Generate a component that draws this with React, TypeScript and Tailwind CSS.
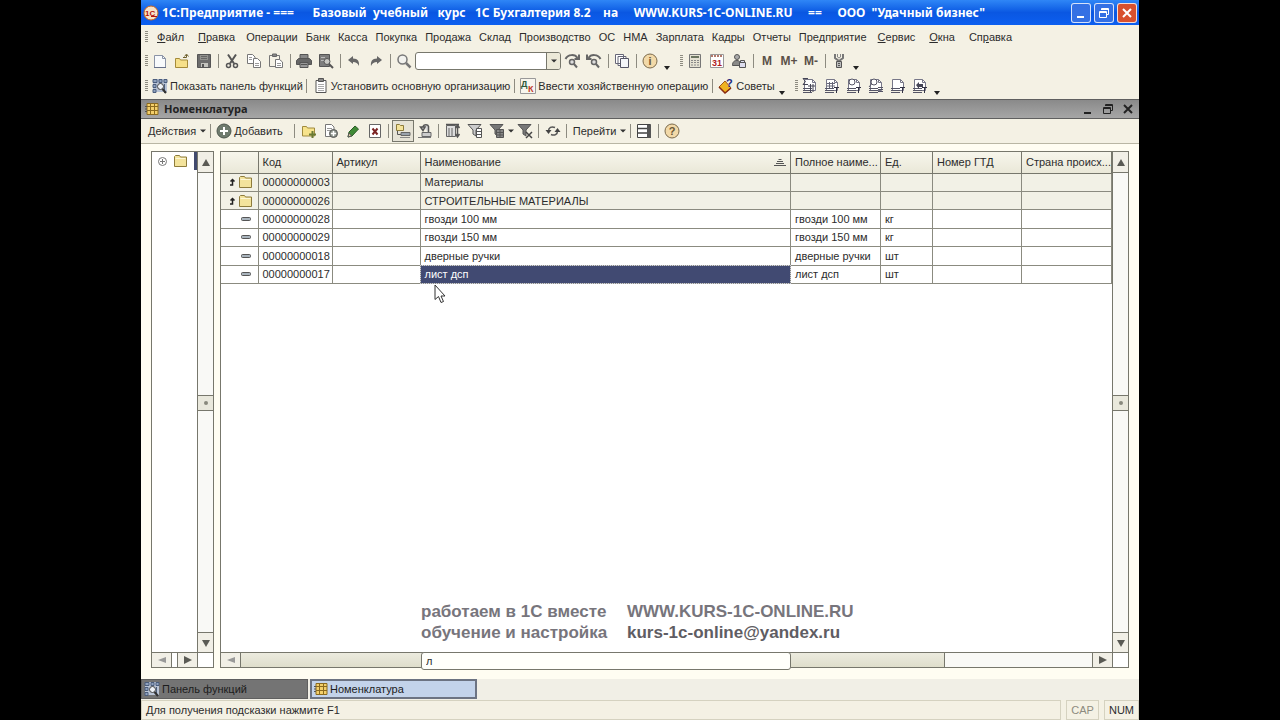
import type { ReactNode } from 'react';

interface Item {
  code: string;
  name: string;
  fullName: string;
  unit: string;
  isGroup: boolean;
}

const ITEMS: Item[] = [
  { code: '00000000003', name: 'Материалы', fullName: '', unit: '', isGroup: true },
  { code: '00000000026', name: 'СТРОИТЕЛЬНЫЕ МАТЕРИАЛЫ', fullName: '', unit: '', isGroup: true },
  { code: '00000000028', name: 'гвозди 100 мм', fullName: 'гвозди 100 мм', unit: 'кг', isGroup: false },
  { code: '00000000029', name: 'гвозди 150 мм', fullName: 'гвозди 150 мм', unit: 'кг', isGroup: false },
  { code: '00000000018', name: 'дверные ручки', fullName: 'дверные ручки', unit: 'шт', isGroup: false },
  { code: '00000000017', name: 'лист дсп', fullName: 'лист дсп', unit: 'шт', isGroup: false },
];

const SELECTED = '00000000017';

// [before, underlined hot key, after]
const MENU: [string, string, string][] = [
  ['', 'Ф', 'айл'],
  ['', 'П', 'равка'],
  ['Операции', '', ''],
  ['Банк', '', ''],
  ['Касса', '', ''],
  ['Покупка', '', ''],
  ['Продажа', '', ''],
  ['Склад', '', ''],
  ['Производство', '', ''],
  ['ОС', '', ''],
  ['НМА', '', ''],
  ['Зарплата', '', ''],
  ['Кадры', '', ''],
  ['Отчеты', '', ''],
  ['Предприятие', '', ''],
  ['', 'С', 'ервис'],
  ['', 'О', 'кна'],
  ['Сп', 'р', 'авка'],
];

/* ---------- icons ---------- */

function Svg({ children }: { children: ReactNode }) {
  return (
    <svg viewBox="0 0 16 16" className="size-4 shrink-0" fill="none" stroke="#555" aria-hidden="true">
      {children}
    </svg>
  );
}

const Logo = () => (
  <svg viewBox="0 0 16 16" className="size-4 shrink-0" aria-hidden="true">
    <circle cx="8" cy="8" r="7" fill="#f7e3c8" stroke="#c9641e" />
    <text x="2" y="11" fontSize="8" fontWeight="bold" fill="#b3120c">1С</text>
    <path d="M8 11.5h6" stroke="#b3120c" />
  </svg>
);
const NewIcon = () => (
  <Svg>
    <path d="M2.500 2.500h8l3 3v9h-11z" fill="#f8fafc" stroke="#8a93a6" />
    <path d="M10.500 2.500v3h3" stroke="#8a93a6" />
    <path d="M2 14.500h12" stroke="#66708a" />
  </Svg>
);
const OpenIcon = () => (
  <Svg>
    <path d="M1.500 5.500h4l1 1.500h7v7.500h-12z" fill="#f6e08a" stroke="#a58b3a" />
    <path d="M9 4.500h3.500V2M10.500 3.500l2-2.500 2 2.500" stroke="#6d5f2c" />
  </Svg>
);
const SaveIcon = () => (
  <Svg>
    <path d="M1.500 1.500h13v13h-13z" fill="#6c6c6c" />
    <path d="M4 2h8v5H4z" fill="#92928e" stroke="none" />
    <path d="M5 3.500h6M5 5.500h6" stroke="#666" />
    <path d="M5 10h7v4H5z" fill="#c4c4be" stroke="none" />
    <path d="M6 11h2v3H6z" fill="#555" stroke="none" />
  </Svg>
);
const CutIcon = () => (
  <Svg>
    <path d="M4 1.500l6 9M12 1.500l-6 9" strokeWidth="2" />
    <circle cx="4.500" cy="12.500" r="2" strokeWidth="1.500" />
    <circle cx="11.500" cy="12.500" r="2" strokeWidth="1.500" />
  </Svg>
);
const CopyIcon = () => (
  <Svg>
    <path d="M1.500 1.500h5l2.500 2.500v6.500H1.500z" fill="#fff" stroke="#777" />
    <path d="M7.500 5.500h4l3 3v6h-7z" fill="#fff" stroke="#777" />
    <path d="M3 4.500h3M3 6.500h3M9 10.500h4M9 12.500h4" stroke="#999" />
  </Svg>
);
const PasteIcon = () => (
  <Svg>
    <path d="M1.500 2.500h10v11h-10z" fill="#f5f2e6" stroke="#777" />
    <path d="M4.500 1h4v2.500h-4z" fill="#888" stroke="#666" />
    <path d="M7.500 6.500h4l3 2.500v5.500h-7z" fill="#fff" stroke="#777" />
    <path d="M9 10.500h4M9 12.500h4" stroke="#999" />
  </Svg>
);
const PrintIcon = () => (
  <Svg>
    <path d="M4 1.500h8V6H4z" fill="#888" />
    <path d="M2.500 5.500h11l2 2v4h-15v-4z" fill="#666" />
    <path d="M4 9.500h8v5H4z" fill="#999" />
    <path d="M5 11.500h6" />
  </Svg>
);
const PreviewIcon = () => (
  <Svg>
    <path d="M1.500 1.500h10v12h-10z" fill="#7d7d7d" />
    <path d="M3 4.500h4M3 7.500h3" stroke="#bbb" />
    <circle cx="9" cy="8.500" r="3" fill="#c8c8c4" />
    <path d="M11 11l4 4" strokeWidth="2" />
  </Svg>
);
const UndoIcon = () => (
  <Svg>
    <path d="M2 7l5-4v2.500c5 0 6.500 3 6 7.500-1.500-3-3-4-6-4V11z" fill="#666" stroke="none" />
  </Svg>
);
const RedoIcon = () => (
  <Svg>
    <path d="M14 7L9 3v2.500c-5 0-6.500 3-6 7.500 1.500-3 3-4 6-4V11z" fill="#666" stroke="none" />
  </Svg>
);
const SearchIcon = () => (
  <Svg>
    <circle cx="6.500" cy="6.500" r="4.500" fill="#f2f2ee" stroke="#777" strokeWidth="1.500" />
    <path d="M10 10l4.500 4.500" stroke="#777" strokeWidth="2.500" />
  </Svg>
);
const FindNextIcon = ({ back }: { back?: boolean }) => (
  <Svg>
    <path d={back ? 'M14.500 6C12 1 5 1 2.500 5M1 1.500v4.500h4.500' : 'M1.500 6C4 1 11 1 13.500 5M15 1.500v4.500h-4.500'} stroke="#666" strokeWidth="2" />
    <circle cx="8" cy="9" r="2.500" stroke="#666" strokeWidth="1.500" fill="#ddd" />
    <path d="M10 11l3 3.500" stroke="#666" strokeWidth="2" />
  </Svg>
);
const WindowsIcon = () => (
  <Svg>
    <path d="M1.500 1.500h8v9h-8zM4 3.500h8v9H4z" fill="#fff" stroke="#667" />
    <path d="M6.500 5.500h8v9h-8z" fill="#f4f6f9" stroke="#556" />
  </Svg>
);
const RoundIcon = ({ sign }: { sign: string }) => (
  <Svg>
    <circle cx="8" cy="8" r="7" fill="#f2d9a8" stroke="#7b6a4b" />
    <text x="8" y="12" fontSize="11" fontWeight="bold" textAnchor="middle" fill="#6a5733" stroke="none">{sign}</text>
  </Svg>
);
const CalcIcon = () => (
  <Svg>
    <path d="M2.500 1.500h11v13h-11z" fill="#e4e1d2" stroke="#777" />
    <path d="M4 4h8" stroke="#6b7560" strokeWidth="2" />
    <path d="M4 7.500h8M4 9.500h8M4 12h8" stroke="#888" strokeDasharray="2 1" />
  </Svg>
);
const CalendarIcon = () => (
  <Svg>
    <path d="M1.500 1.500h13v13h-13z" fill="#fff" stroke="#999" />
    <path d="M2 3h12" stroke="#b3796b" strokeWidth="2" strokeDasharray="2 1" />
    <text x="8" y="13" fontSize="9" fontWeight="bold" textAnchor="middle" fill="#b01c1c" stroke="none">31</text>
  </Svg>
);
const UserIcon = () => (
  <Svg>
    <circle cx="6" cy="4" r="2.500" fill="#aaa" />
    <path d="M1.500 12.500c0-4 2-5 4.500-5s3.500 1.500 3.500 5z" fill="#8a8a88" />
    <path d="M8.500 9.500h6v5h-6zM9.500 9.500V7.500h4v2" fill="#dde" />
  </Svg>
);
const WrenchIcon = () => (
  <Svg>
    <path d="M4 1v4l4 3 4-3V1M8 7v3" stroke="#777" strokeWidth="2" />
    <path d="M6.500 1v3L8 5l1.500-1V1" stroke="#888" />
    <path d="M5.500 8.500h5v6h-5z" fill="#bbb" />
    <path d="M7 10.500h2M7 12.500h2" />
  </Svg>
);
const FunctionsIcon = () => (
  <Svg>
    <path d="M1 1h14v13H1z" fill="#b9c4d6" stroke="none" />
    <path d="M1 1.500h4v3H1zM7 1.500h3v3H7zM12 1.500h3v3h-3zM1 6.500h3v3H1zM1 11.500h3v3H1zM12.500 6v9" fill="#8ea1bd" stroke="#4b5d7c" />
    <circle cx="8.500" cy="8.500" r="3" fill="#eef2f8" stroke="#444" />
    <path d="M10.500 11l3.500 4" stroke="#333" strokeWidth="2" />
  </Svg>
);
const ClipboardIcon = () => (
  <Svg>
    <path d="M3 2.500h10v12H3z" fill="#fff" />
    <path d="M5.500.5h5v3h-5z" fill="#888" />
    <path d="M5 6.500h6M5 8.500h6M5 10.500h6M5 12.500h6" stroke="#aaa" />
  </Svg>
);
const DebitIcon = () => (
  <Svg>
    <path d="M.5.5h15v15H.5z" fill="#f8f6ee" stroke="#999" />
    <text x="1" y="9" fontSize="9" fontWeight="bold" fill="#2c5a3c" stroke="none">Д</text>
    <text x="8" y="14" fontSize="9" fontWeight="bold" fill="#c0392b" stroke="none">К</text>
  </Svg>
);
const AdviceIcon = () => (
  <Svg>
    <path d="M1 9l6-6 6 7-6 5z" fill="#eeb320" stroke="#a35b16" />
    <path d="M1 9l6 6 6-5" stroke="#8a2b12" strokeWidth="1.500" />
    <text x="8" y="9" fontSize="11" fontWeight="bold" fill="#1d2a80" stroke="none">?</text>
  </Svg>
);
const ReportIcon = ({ kind }: { kind: string }) => (
  <Svg>
    <path d="M2.500 1.500h8l3 3v8h-11z" fill="#fff" stroke="#778" />
    <path d="M10.500 1.500v3h3" stroke="#778" />
    <path d="M1 10.500h9M1 12.500h9M1 14.500h9" stroke="#556" />
    {kind === 'sum' && <path d="M6 .5H1l2.500 3L1 6.500h5M6 8h7M8.500 6v8M11 6v8" stroke="#445" />}
    {kind === 'grid' && <path d="M3 5.500h8M3 8h8M5.500 4v6M8.500 4v6" stroke="#667" />}
    {kind.startsWith('lens') && <circle cx="6" cy="4" r="3" fill="#fff" stroke="#556" />}
    {kind === 'lens2' && <path d="M3.500 6L1 9M10 9.500h5M10 11.500h5M10 13.500h5" stroke="#556" />}
    {kind === 'arrow' && <path d="M4 7l3-3v2h4v3H7v2z" fill="#445" stroke="none" />}
    {kind !== 'sum' && kind !== 'lens2' && <path d="M10 9.500h5M12.500 9.500V15" stroke="#334" />}
  </Svg>
);
const JournalIcon = () => (
  <Svg>
    <path d="M3 2.500h11v11H3z" fill="#f3cf6b" stroke="#8b6a1e" />
    <path d="M3 5.500h11M3 9.500h11M6.500 2v12M10.500 2v12" stroke="#8b6a1e" />
    <path d="M1 5.500h2M1 8h2M1 10.500h2" stroke="#555" />
  </Svg>
);
const AddIcon = () => (
  <Svg>
    <circle cx="8" cy="8" r="7" fill="#6f7b6e" stroke="#4d574d" />
    <path d="M8 4v8M4 8h8" stroke="#fff" strokeWidth="2" />
  </Svg>
);
const FolderAddIcon = () => (
  <Svg>
    <path d="M1.500 3.500h4l1 1.500h7v8h-12z" fill="#f7e38c" stroke="#a08a3e" />
    <path d="M11.500 8v7M8 11.500h7" stroke="#6a7a34" strokeWidth="2" />
  </Svg>
);
const CopyAddIcon = () => (
  <Svg>
    <path d="M2.500 1.500h6l2.500 2.500v9.500H2.500z" fill="#fff" stroke="#777" />
    <path d="M4 5.500h5M4 7.500h3" stroke="#999" />
    <circle cx="10.500" cy="10.500" r="4" fill="#8b938a" stroke="#555" />
    <path d="M10.500 8v5M8 10.500h5" stroke="#fff" strokeWidth="1.500" />
  </Svg>
);
const PencilIcon = () => (
  <Svg>
    <path d="M3 14l1-5 6-6 3.500 3-6.500 7z" fill="#3f8a36" stroke="#2b5c27" />
    <path d="M3 14l1-4 2.500 3z" fill="#e9d9a8" stroke="#555" />
  </Svg>
);
const DeleteMarkIcon = () => (
  <Svg>
    <path d="M2.500 1.500h11v13h-11z" fill="#fff" stroke="#666" />
    <path d="M5.500 5.500l5 6M10.500 5.500l-5 6" stroke="#7c2424" strokeWidth="2" />
  </Svg>
);
const HierarchyIcon = () => (
  <Svg>
    <path d="M1.500 1.500h3l1 1h3v5h-7z" fill="#f4e39a" stroke="#8c7b3a" />
    <path d="M2.500 8v3.500H6" stroke="#555" />
    <path d="M6 9.500h9v3H6z" fill="#9aa3ad" stroke="#666" />
    <path d="M5 14.500h10" stroke="#888" />
  </Svg>
);
const MoveIcon = () => (
  <Svg>
    <path d="M6 3.500C7 1 11 1 11.500 3.500v6M3.500 4L6 7.500l2-3.500z" fill="#ddd" stroke="#555" strokeWidth="1.500" />
    <path d="M5 9.500h9v4H5z" fill="#ccc" stroke="#666" />
    <path d="M1 14.500h13" stroke="#777" />
  </Svg>
);
const FilterIcon = ({ kind }: { kind: string }) => (
  <Svg>
    {kind === 'list' && <path d="M1.500 2.500h9v11h-9zM4 5v8M7 5v8" fill="#ddd" stroke="#666" />}
    {kind === 'list' && <path d="M1 1.500h13M12.500 3v10M10.500 11l2 3 2-3M10.500 5l2-3 2 3" strokeWidth="1.500" />}
    {kind !== 'list' && <path d="M1 1.500h13L9 7v6l-3-2V7z" fill={kind === 'value' ? '#ccc' : '#777'} />}
    {kind === 'value' && <path d="M9.500 5.500h5v9h-5zM10 8.500h4M10 11.500h4" fill="#fff" />}
    {kind === 'history' && <path d="M7.500 6.500h7v8h-7zM8 9.500h6M8 12h6M11 7v7" fill="#888" />}
    {kind === 'off' && <path d="M9 9l6 6M15 9l-6 6" stroke="#444" strokeWidth="1.500" />}
  </Svg>
);
const RefreshIcon = () => (
  <Svg>
    <path d="M3.500 8C3.500 4.500 6.500 3 10 4.500M12.500 8c0 3.500-3 5-6.500 3.500" strokeWidth="1.500" />
    <path d="M.5 7l3 4 3-4zM9.500 9l3-4 3 4z" fill="#444" stroke="none" />
  </Svg>
);
const ListSetupIcon = () => (
  <Svg>
    <path d="M1.500 1.500h13v13h-13z" fill="#fff" stroke="#444" />
    <path d="M2 5.500h9M2 10h9" stroke="#444" strokeWidth="1.500" />
    <path d="M11 2h4v13h-4z" fill="#555" stroke="none" />
  </Svg>
);
const FolderIcon = () => (
  <Svg>
    <path d="M1.500 3.500l1-1h4l1 1.500h6v9.500h-12z" fill="#f3e39c" stroke="#8e7c3c" />
    <path d="M2.500 5.500h10" stroke="#fdf7d6" />
  </Svg>
);
const RestoreIcon = () => (
  <svg viewBox="0 0 12 12" className="size-3" fill="none" stroke="currentColor" aria-hidden="true">
    <path d="M3.500 3V1.500h7v6H9M3.500 2.500h7M1.500 4.500h7v6h-7zM1.500 5.500h7" />
  </svg>
);
const CloseIcon = () => (
  <svg viewBox="0 0 12 12" className="size-3" fill="none" stroke="currentColor" strokeWidth="2" aria-hidden="true">
    <path d="M2 2l8 8M10 2l-8 8" />
  </svg>
);
const MinimizeIcon = () => (
  <svg viewBox="0 0 12 12" className="size-3" fill="none" stroke="currentColor" strokeWidth="2" aria-hidden="true">
    <path d="M2 10h7" />
  </svg>
);

const ARROWS: Record<string, string> = {
  up: 'M4 1l4 7H0z',
  down: 'M4 8l4-7H0z',
  left: 'M0 4l8-3v6z',
  right: 'M8 4L0 0v8z',
};

function Arrow({ dir, pale }: { dir: string; pale?: boolean }) {
  return (
    <svg viewBox="0 0 8 8" className="size-2" fill={pale ? '#999' : '#5a5a54'} aria-hidden="true">
      <path d={ARROWS[dir]} />
    </svg>
  );
}

/* ---------- toolbar parts ---------- */

function Grip() {
  return (
    <svg viewBox="0 0 7 14" className="h-[14px] w-[7px] shrink-0" stroke="#8d8b80" aria-hidden="true">
      <path d="M3 1.500h3M3 3.500h3M3 5.500h3M3 7.500h3M3 9.500h3M3 11.500h3" />
    </svg>
  );
}

function Sep() {
  return (
    <span className="flex w-[6px] shrink-0 justify-center">
      <span className="h-[14px] w-px bg-[#8d8b80]" />
    </span>
  );
}

function Caret() {
  return (
    <svg viewBox="0 0 6 6" className="size-[6px] shrink-0" fill="#333" aria-hidden="true">
      <path d="M0 1.500h6l-3 3z" />
    </svg>
  );
}

function IconButton({ label, children }: { label: string; children: ReactNode }) {
  return (
    <button
      type="button"
      aria-label={label}
      className="flex h-[22px] w-[22px] shrink-0 items-center justify-center text-[12px] font-bold text-[#5a5048]"
    >
      {children}
    </button>
  );
}

function TextButton({ icon, menu, children }: { icon?: ReactNode; menu?: boolean; children: ReactNode }) {
  return (
    <button type="button" className="flex h-[22px] shrink-0 items-center gap-[2px] whitespace-nowrap pr-px pl-[3px]">
      {icon}
      {children}
      {menu && (
        <span className="pl-[2px]">
          <Caret />
        </span>
      )}
    </button>
  );
}

function MoreButton() {
  return (
    <button type="button" aria-label="Параметры панели" className="flex h-[22px] w-3 shrink-0 items-end justify-center pb-px">
      <svg viewBox="0 0 6 6" className="size-[6px]" fill="#222" aria-hidden="true">
        <path d="M0 1h6l-3 4z" />
      </svg>
    </button>
  );
}

function ScrollButton({ dir, pale }: { dir: string; pale?: boolean }) {
  return (
    <button
      type="button"
      aria-label="Прокрутка"
      className="flex min-h-[14px] min-w-[15px] items-center justify-center bg-[#f1efe6]"
    >
      <Arrow dir={dir} pale={pale} />
    </button>
  );
}

function VerticalScroll() {
  return (
    <div className="flex w-4 shrink-0 flex-col border-l border-[#77776c] bg-[#f9f9f6]">
      <div className="flex h-[21px] flex-col border-b border-[#77776c] *:flex-1">
        <ScrollButton dir="up" />
      </div>
      <div className="flex flex-1 flex-col justify-center">
        <div className="flex h-4 items-center justify-center border-y border-[#77776c] bg-[#e9e8dc]">
          <span className="size-1 rounded-full bg-[#88887c]" />
        </div>
      </div>
      <div className="flex h-5 flex-col border-t border-[#77776c] *:flex-1">
        <ScrollButton dir="down" />
      </div>
    </div>
  );
}

/* ---------- page parts ---------- */

function TitleBar() {
  return (
    <header className="flex h-[25px] items-center gap-[3px] bg-linear-to-b from-[#2f86f6] via-[#0a57e2] to-[#0c5ff0] pr-[2px] pl-[2px] text-white">
      <Logo />
      <h1 className="flex-1 whitespace-pre font-['Noto_Sans'] text-[12px] font-bold">
        {'1С:Предприятие - ===      Базовый  учебный   курс   1С Бухгалтерия 8.2    на     WWW.KURS-1C-ONLINE.RU     ==     ООО  "Удачный бизнес"'}
      </h1>
      <div className="flex gap-[3px]">
        <button type="button" aria-label="Свернуть" className="flex size-5 items-center justify-center rounded-[3px] border border-white/80 bg-[#3470e4]">
          <MinimizeIcon />
        </button>
        <button type="button" aria-label="Восстановить" className="flex size-5 items-center justify-center rounded-[3px] border border-white/80 bg-[#3470e4]">
          <RestoreIcon />
        </button>
        <button type="button" aria-label="Закрыть" className="flex size-5 items-center justify-center rounded-[3px] border border-white/80 bg-[#d8502e]">
          <CloseIcon />
        </button>
      </div>
    </header>
  );
}

function MenuBar() {
  return (
    <nav className="flex h-6 items-center pl-px">
      <Grip />
      <div className="flex gap-2 pl-[5px]">
        {MENU.map(([before, key, after]) => (
          <button key={before + key + after} type="button" className={key ? 'px-[3px] whitespace-nowrap' : 'whitespace-nowrap'}>
            {before}
            <u>{key}</u>
            {after}
          </button>
        ))}
      </div>
    </nav>
  );
}

function MainToolbar() {
  return (
    <div className="flex h-6 items-center pl-px">
      <Grip />
      <IconButton label="Новый"><NewIcon /></IconButton>
      <IconButton label="Открыть"><OpenIcon /></IconButton>
      <IconButton label="Сохранить"><SaveIcon /></IconButton>
      <Sep />
      <IconButton label="Вырезать"><CutIcon /></IconButton>
      <IconButton label="Копировать"><CopyIcon /></IconButton>
      <IconButton label="Вставить"><PasteIcon /></IconButton>
      <Sep />
      <IconButton label="Печать"><PrintIcon /></IconButton>
      <IconButton label="Предварительный просмотр"><PreviewIcon /></IconButton>
      <Sep />
      <IconButton label="Отменить"><UndoIcon /></IconButton>
      <IconButton label="Вернуть"><RedoIcon /></IconButton>
      <Sep />
      <IconButton label="Найти"><SearchIcon /></IconButton>
      <div className="flex h-[18px] w-[146px] overflow-hidden rounded-[3px] border border-[#77776c] bg-white">
        <input type="text" aria-label="Строка поиска" className="min-w-0 flex-1 px-1 outline-none" />
        <button type="button" aria-label="История поиска" className="flex w-[14px] items-center justify-center border-l border-[#77776c] bg-[#ece9d8]">
          <Caret />
        </button>
      </div>
      <IconButton label="Найти следующий"><FindNextIcon /></IconButton>
      <IconButton label="Найти предыдущий"><FindNextIcon back /></IconButton>
      <Sep />
      <IconButton label="Окна"><WindowsIcon /></IconButton>
      <Sep />
      <IconButton label="Справка"><RoundIcon sign="i" /></IconButton>
      <MoreButton />
      <span className="w-1" />
      <Grip />
      <IconButton label="Калькулятор"><CalcIcon /></IconButton>
      <IconButton label="Календарь"><CalendarIcon /></IconButton>
      <IconButton label="Пользователи"><UserIcon /></IconButton>
      <Sep />
      <IconButton label="Поместить в память">M</IconButton>
      <IconButton label="Добавить к памяти">M+</IconButton>
      <IconButton label="Вычесть из памяти">M-</IconButton>
      <Sep />
      <IconButton label="Настройка"><WrenchIcon /></IconButton>
      <MoreButton />
    </div>
  );
}

function AccountingToolbar() {
  return (
    <div className="flex h-[26px] items-center pl-px">
      <Grip />
      <TextButton icon={<FunctionsIcon />}>Показать панель функций</TextButton>
      <Sep />
      <TextButton icon={<ClipboardIcon />}>Установить основную организацию</TextButton>
      <Sep />
      <TextButton icon={<DebitIcon />}>Ввести хозяйственную операцию</TextButton>
      <Sep />
      <TextButton icon={<AdviceIcon />}>Советы</TextButton>
      <MoreButton />
      <span className="w-1" />
      <Grip />
      <IconButton label="Оборотно-сальдовая ведомость"><ReportIcon kind="sum" /></IconButton>
      <IconButton label="Шахматка"><ReportIcon kind="grid" /></IconButton>
      <IconButton label="Анализ счета"><ReportIcon kind="lens" /></IconButton>
      <IconButton label="Карточка счета"><ReportIcon kind="lens2" /></IconButton>
      <IconButton label="Обороты счета"><ReportIcon kind="plain" /></IconButton>
      <IconButton label="Отчет по проводкам"><ReportIcon kind="arrow" /></IconButton>
      <MoreButton />
    </div>
  );
}

function DocumentTitle() {
  return (
    <div className="flex h-5 items-center gap-1 border-y border-[#5f5f5f] bg-linear-to-b from-[#8a8a8a] to-[#a6a6a6] pr-[5px] pl-[3px] text-[#222]">
      <JournalIcon />
      <h2 className="flex-1 font-['Noto_Sans'] text-[11px] font-bold">Номенклатура</h2>
      <div className="flex gap-2">
        <button type="button" aria-label="Свернуть окно"><MinimizeIcon /></button>
        <button type="button" aria-label="Восстановить окно"><RestoreIcon /></button>
        <button type="button" aria-label="Закрыть окно"><CloseIcon /></button>
      </div>
    </div>
  );
}

function DocumentToolbar() {
  return (
    <div className="flex h-[25px] items-center border-b border-[#b9b6a4] pl-1">
      <TextButton menu>Действия</TextButton>
      <Sep />
      <TextButton icon={<AddIcon />}>Добавить</TextButton>
      <span className="w-2" />
      <Sep />
      <IconButton label="Новая группа"><FolderAddIcon /></IconButton>
      <IconButton label="Добавить копированием"><CopyAddIcon /></IconButton>
      <IconButton label="Изменить"><PencilIcon /></IconButton>
      <IconButton label="Пометить на удаление"><DeleteMarkIcon /></IconButton>
      <Sep />
      <button type="button" aria-label="Иерархический просмотр" className="flex size-[22px] items-center justify-center border border-[#77776c] bg-[#e6e3d6]">
        <HierarchyIcon />
      </button>
      <IconButton label="Переместить в группу"><MoveIcon /></IconButton>
      <Sep />
      <IconButton label="Отбор и сортировка"><FilterIcon kind="list" /></IconButton>
      <IconButton label="Отбор по значению"><FilterIcon kind="value" /></IconButton>
      <IconButton label="История отборов"><FilterIcon kind="history" /></IconButton>
      <Caret />
      <IconButton label="Отключить отбор"><FilterIcon kind="off" /></IconButton>
      <Sep />
      <IconButton label="Обновить"><RefreshIcon /></IconButton>
      <Sep />
      <TextButton menu>Перейти</TextButton>
      <Sep />
      <IconButton label="Настройка списка"><ListSetupIcon /></IconButton>
      <Sep />
      <IconButton label="Справка"><RoundIcon sign="?" /></IconButton>
    </div>
  );
}

function GroupTree() {
  return (
    <aside className="flex w-[63px] shrink-0 flex-col border border-[#77776c] bg-white">
      <div className="flex flex-1">
        <div className="flex flex-1 items-start overflow-hidden">
          <div className="flex h-[18px] flex-1 items-center justify-between pl-[6px]">
            <svg viewBox="0 0 9 9" className="size-[9px] shrink-0" fill="none" stroke="#777" aria-hidden="true">
              <circle cx="4.500" cy="4.500" r="4" />
              <path d="M2 4.500h5M4.500 2v5" />
            </svg>
            <FolderIcon />
            <span className="h-[18px] w-[3px] bg-[#414a6e]" />
          </div>
        </div>
        <VerticalScroll />
      </div>
      <div className="flex h-[15px] border-t border-[#77776c] *:border-r *:border-[#77776c]">
        <div className="flex w-5 *:flex-1">
          <ScrollButton dir="left" pale />
        </div>
        <span className="flex-1" />
        <div className="flex w-5 *:flex-1">
          <ScrollButton dir="right" />
        </div>
        <span className="w-[15px] border-r-0!" />
      </div>
    </aside>
  );
}

function ItemRow({ item }: { item: Item }) {
  const selected = item.code === SELECTED;
  return (
    <tr className={item.isGroup ? 'bg-[#f2f1e6]' : 'bg-white'}>
      <td>
        <span className="flex items-center justify-end gap-[2px]">
          {item.isGroup ? (
            <>
              <svg viewBox="0 0 8 8" className="size-2" fill="none" stroke="#222" strokeWidth="1.500" aria-hidden="true">
                <path d="M2 7h2.500V2M2.500 3.500l2-2 2 2" />
              </svg>
              <FolderIcon />
            </>
          ) : (
            <svg viewBox="0 0 16 16" className="size-4" aria-hidden="true">
              <rect x="3.500" y="6.500" width="9" height="3" rx="1" fill="#a9b4bd" stroke="#555" />
            </svg>
          )}
        </span>
      </td>
      <td>{item.code}</td>
      <td />
      <td className={selected ? 'bg-[#414a72] text-white outline-1 -outline-offset-1 outline-dotted outline-[#c9cce0]' : ''}>{item.name}</td>
      <td>{item.fullName}</td>
      <td>{item.unit}</td>
      <td />
      <td />
    </tr>
  );
}

function ItemTable() {
  return (
    <table className="h-[132px] w-full table-fixed border-collapse text-left [&_td]:border-r [&_td]:border-b [&_td]:border-[#8b8b80] [&_td]:px-1 [&_td]:py-0 [&_th]:border-r [&_th]:border-b [&_th]:border-[#77776c] [&_th]:py-0 [&_th]:pr-0 [&_th]:pl-1 [&_th]:font-normal [&_th]:whitespace-nowrap">
      <thead>
        <tr className="h-[21px] bg-linear-to-b from-[#f7f6ec] to-[#eae8d8]">
          <th className="w-[37px]" aria-label="Вид" />
          <th className="w-[74px]">Код</th>
          <th className="w-[88px]">Артикул</th>
          <th>
            <span className="flex items-center justify-between pr-1">
              Наименование
              <svg viewBox="0 0 12 8" className="h-2 w-3" stroke="#555" aria-hidden="true">
                <path d="M4.500 1.500h3M3 3.500h6M2 5.500h8M0 7.500h12" />
              </svg>
            </span>
          </th>
          <th className="w-[90px]">Полное наиме...</th>
          <th className="w-[52px]">Ед.</th>
          <th className="w-[89px]">Номер ГТД</th>
          <th className="w-[90px]">Страна происх...</th>
        </tr>
      </thead>
      <tbody>
        {ITEMS.map((item) => (
          <ItemRow key={item.code} item={item} />
        ))}
      </tbody>
    </table>
  );
}

function ItemPanel() {
  return (
    <section className="flex min-w-0 flex-1 flex-col border border-[#77776c] bg-white">
      <div className="flex flex-1">
        <div className="relative flex min-w-0 flex-1 flex-col justify-between">
          <ItemTable />
          <svg viewBox="0 0 12 20" className="absolute top-[132px] left-[213px] h-5 w-3" fill="#fff" stroke="#333" aria-hidden="true">
            <path d="M1 1v14.500l3.500-3 2.500 6 2.500-1-2.500-5.500h4z" />
          </svg>
          <div className="grid grid-cols-[206px_auto] pb-[9px] pl-[200px] text-[17px] leading-[21px] font-bold text-[#77757c]">
            <span>работаем в 1С вместе</span>
            <span>WWW.KURS-1C-ONLINE.RU</span>
            <span>обучение и настройка</span>
            <a href="mailto:kurs-1c-online@yandex.ru" className="text-[#5f5d63]">kurs-1c-online@yandex.ru</a>
          </div>
        </div>
        <VerticalScroll />
      </div>
      <div className="flex h-[15px] border-t border-[#77776c] *:border-r *:border-[#77776c]">
        <div className="flex w-5 *:flex-1">
          <ScrollButton dir="left" pale />
        </div>
        <div className="flex h-[14px] flex-1 bg-linear-to-b from-[#ecebdf] to-[#dfdecb] pr-[153px] pl-[180px]">
          <input
            type="text"
            aria-label="Быстрый поиск"
            defaultValue="л"
            className="-mt-px h-[18px] min-w-0 flex-1 rounded-[3px] border border-[#77776c] bg-[#fffffb] px-1 outline-none"
          />
        </div>
        <span className="w-[148px] bg-[#f9f9f6]" />
        <div className="flex w-5 *:flex-1">
          <ScrollButton dir="right" />
        </div>
        <span className="w-[15px] border-r-0!" />
      </div>
    </section>
  );
}

function WindowTabs() {
  return (
    <div className="flex h-[21px] gap-[2px] bg-[#f1efe6] pb-px">
      <button type="button" className="flex w-[167px] items-center gap-[2px] border border-[#5f5f5f] bg-[#747474] pl-[2px] text-[#1c1c1c]">
        <FunctionsIcon />
        Панель функций
      </button>
      <button type="button" className="flex w-[167px] items-center gap-px border-2 border-[#6c7382] bg-[#c3d3ea] pl-px text-[#1c1c1c]">
        <JournalIcon />
        Номенклатура
      </button>
    </div>
  );
}

function StatusBar() {
  return (
    <footer className="flex h-5 items-stretch gap-[5px] *:border *:border-[#d5d2c0] *:px-1 *:leading-[18px]">
      <span className="flex-1">Для получения подсказки нажмите F1</span>
      <span className="text-[#8d8b80]">CAP</span>
      <span>NUM</span>
    </footer>
  );
}

export default function App() {
  return (
    <div className="flex min-h-screen bg-black px-[141px] font-['Liberation_Sans',Arial,sans-serif] text-[11px] leading-[14px] text-[#2c2c2c]">
      <div className="flex min-w-0 flex-1 flex-col bg-[#f4f1e4]">
        <TitleBar />
        <MenuBar />
        <MainToolbar />
        <AccountingToolbar />
        <DocumentTitle />
        <DocumentToolbar />
        <main className="flex flex-1 gap-[6px] bg-[#fffdf2] pt-[7px] pr-[10px] pb-[11px] pl-[10px]">
          <GroupTree />
          <ItemPanel />
        </main>
        <WindowTabs />
        <StatusBar />
      </div>
    </div>
  );
}
